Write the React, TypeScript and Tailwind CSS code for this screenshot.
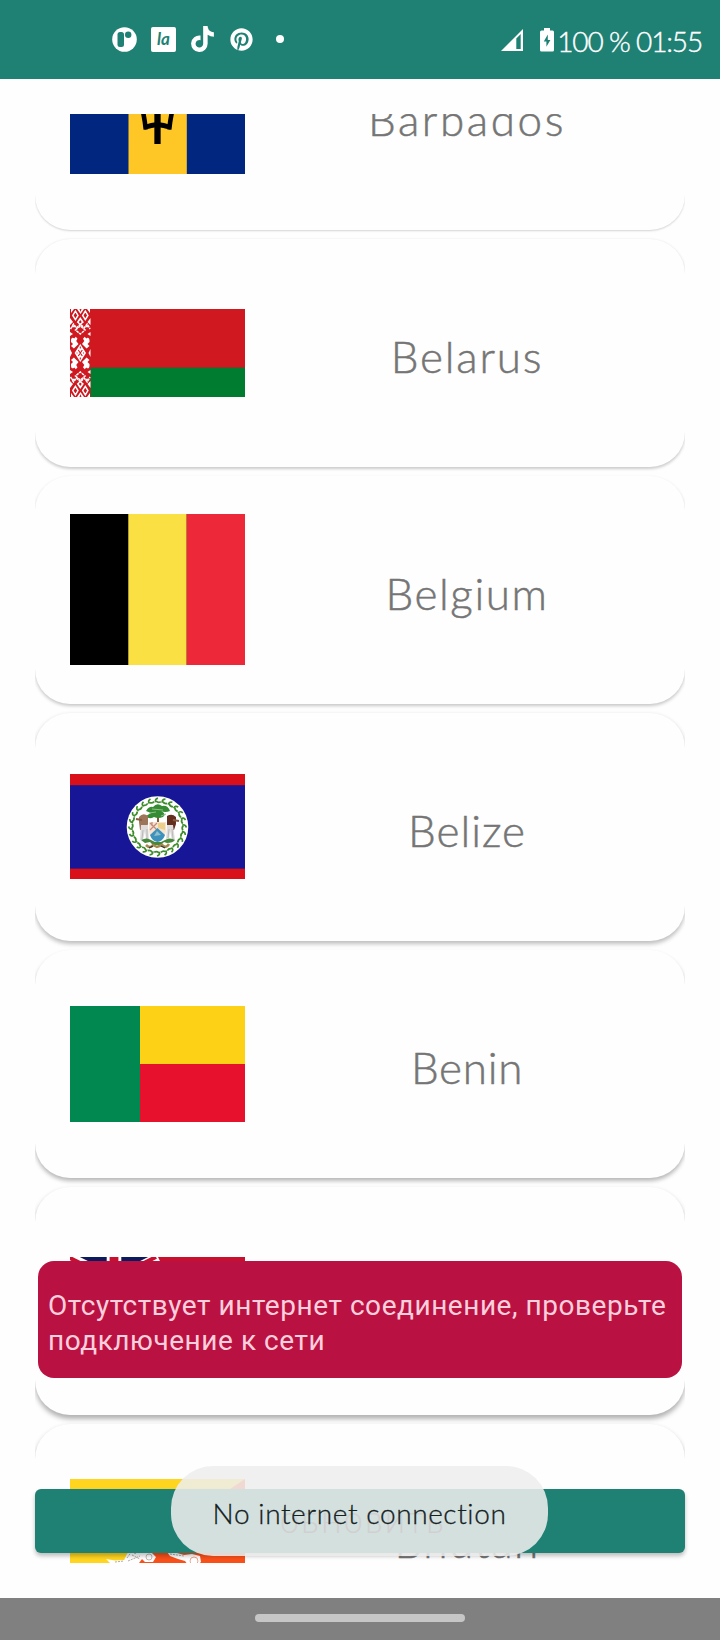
import type { ReactNode } from "react";
import { FaPinterest, FaTiktok } from "react-icons/fa6";

const sans = "font-['Lato','Noto_Sans',sans-serif] font-light";

function BarbadosFlag() {
  return (
    <svg width="175" height="116" viewBox="0 0 175 116" className="block">
      <rect width="175" height="116" fill="#00267f" />
      <rect x="58.5" width="58.3" height="116" fill="#ffc726" />
      <g fill="none" stroke="#000">
        <path d="M87.5 28V86" strokeWidth="6.3" />
        <path d="M70 42Q74 55 75.8 71.5" strokeWidth="4.6" />
        <path d="M105 42Q101 55 99.2 71.5" strokeWidth="4.6" />
        <path d="M74 69.5Q82 67 87.5 66.5Q93 67 101 69.5" strokeWidth="4.8" />
      </g>
    </svg>
  );
}

function OrnamentHalf() {
  return (
    <g>
      <path d="M1 0h3l-3 4zM7 0h2.5l1 3 1-3H14l-3.5 5zM17 0h3v4zM0 9l3 4-3 3zM20.5 9l-3 4 3 3zM10.3 8l3.6 5.2-3.6 3-3.6-3z" fill="#fff" />
      <path d="M5.4 2.2 8 6.4l-2.6 4.2-2.6-4.2zM15.3 2.2l2.6 4.2-2.6 4.2-2.6-4.2z" fill="none" stroke="#fff" strokeWidth="1.5" />
      <path d="M5.4 5l1 1.4-1 1.5-1-1.5zM15.3 5l1 1.4-1 1.5-1-1.5zM10.3 11l1.4 2-1.4 2-1.4-2z" fill="#cf1820" />
      <path d="M.5 20l3-5 3 4 3.8-4 3.8 4 3-4 3 5M2 17.5h3M15.5 17.5h3M5.5 21l4.8-4 4.8 4-4.8 4z" fill="none" stroke="#fff" strokeWidth="1.5" strokeDasharray="2.8 .7" />
      <path d="M0 23l3 2-3 2zM20.5 23l-3 2 3 2z" fill="#fff" />
      <path d="M1 33c-.5-5 2.2-5 3.2-3.5l1.6-1.8 1.7 2L6.2 32l2.3 3-4.6 4.5L1 37l2-2zM19.5 33c.5-5-2.2-5-3.2-3.5l-1.6-1.8-1.7 2 1.3 2.3-2.3 3 4.6 4.5 2.9-2.5-2-2z" fill="#fff" />
      <path d="M0 40l2 4H0zM20.5 40l-2 4h2z" fill="#fff" />
    </g>
  );
}

function BelarusFlag() {
  return (
    <svg width="175" height="88" viewBox="0 0 175 88" className="block">
      <rect width="175" height="59" fill="#cf1820" />
      <rect y="58.6" width="175" height="29.4" fill="#007c30" />
      <rect width="20.5" height="88" fill="#cf1820" />
      <OrnamentHalf />
      <g transform="matrix(1 0 0 -1 0 88)">
        <OrnamentHalf />
      </g>
      <path d="M10.3 35l5.7 9-5.7 9-5.7-9z" fill="#fff" />
      <path d="M8.3 41l4 6M12.3 41l-4 6M10.3 37.5v2M10.3 48.5v2M6.5 44h1M13 44h1" stroke="#cf1820" strokeWidth="1.1" />
    </svg>
  );
}

function BelgiumFlag() {
  return (
    <svg width="175" height="151" viewBox="0 0 175 151" className="block">
      <rect width="175" height="151" fill="#000" />
      <rect x="58.3" width="58.4" height="151" fill="#fae042" />
      <rect x="116.7" width="58.3" height="151" fill="#ed2939" />
    </svg>
  );
}

const leaves = Array.from({ length: 24 }, (_, i) => i * 15);

function BelizeFlag() {
  return (
    <svg width="175" height="105" viewBox="0 0 175 105" className="block">
      <rect width="175" height="105" fill="#d90f19" />
      <rect y="11.2" width="175" height="83.4" fill="#171696" />
      <circle cx="87.5" cy="53" r="30.8" fill="#fff" />
      {leaves.map((a) => (
        <path
          key={a}
          d="M85.7 28.3q-1.2-3.2 2.3-4.2M86.2 27.2q2 2 4.6.5"
          stroke="#3d8c2b"
          strokeWidth="1.7"
          fill="none"
          transform={`rotate(${a} 87.5 53)`}
        />
      ))}
      <path d="M87 36h2v12h-2z" fill="#7c5a3a" />
      <path d="M76 37q3-5 7-4 4-5 9-1 6-1 8 5-5 2-9 0 6 3 2 6-5 2-9 0-5 3-8-1l5-3z" fill="#378b34" />
      <path d="M82 35l11 1M79 39l7-1M91 42l5-2" stroke="#8bc184" />
      <path d="M69 43q4-5 9-1v8l-2 6h-6l-1-8z" fill="#9d765a" />
      <path d="M97 42q5-3 9 1v7l-2 6h-7v-9z" fill="#642f1f" />
      <path d="M66 45l6 1M103 46l6 1" stroke="#875b43" strokeWidth="2" />
      <path d="M71 51h7l1 15h-3l-1-9-2 9h-3zM97 51h6l2 15h-3l-2-9-1 9h-3z" fill="#dedddc" />
      <path d="M73 56l-1 9M77 55v10M99 55l-1 9M102 55l1 10" stroke="#aaa" strokeWidth=".7" />
      <path d="M79 48h17v9q-1 9-8.500 11Q80 66 79 57z" fill="#f6e4d0" />
      <path d="M80 49l7 7M87 49l-7 7M82 48v4" stroke="#c4897c" strokeWidth="1.2" />
      <path d="M88 49h7v7l-7-2z" fill="#ecd08a" />
      <path d="M80 61l7.500-7 7.500 7q-2 6-7.500 7-5.500-1-7.500-7z" fill="#3d91bd" />
      <path d="M84 62l3-5 4 4" fill="#8ebfca" />
      <path d="M71 66q6-3 10 0l4 2h6l4-2q5-3 10 0-2 3-8 3l-3-1-3 3H83l-3-3-5 1z" fill="#47883a" />
      <path d="M76 71q4 4 7 0l4 2 5-2q4 4 7-1" stroke="#a7894f" strokeWidth="2.500" fill="none" />
      <path d="M79 74l4-2M91 72l4 2" stroke="#333" strokeWidth="1.200" />
    </svg>
  );
}

function BeninFlag() {
  return (
    <svg width="175" height="116" viewBox="0 0 175 116" className="block">
      <rect width="70" height="116" fill="#008850" />
      <rect x="70" width="105" height="58" fill="#fcd116" />
      <rect x="70" y="58" width="105" height="58" fill="#e8112d" />
    </svg>
  );
}

function BermudaFlag() {
  return (
    <svg width="175" height="88" viewBox="0 0 175 88" className="block">
      <rect width="175" height="88" fill="#c8102e" />
      <rect width="88" height="44" fill="#0b1a5c" />
      <path d="M0 0l88 44M88 0L0 44" stroke="#fff" strokeWidth="8.800" />
      <path d="M-2 0l88 44M86 0L0 43" stroke="#c8102e" strokeWidth="4" />
      <path d="M44 0v44M0 22h88" stroke="#fff" strokeWidth="14.600" />
      <path d="M44 0v44M0 22h88" stroke="#c8102e" strokeWidth="8.800" />
    </svg>
  );
}

function BhutanFlag() {
  return (
    <svg width="175" height="117" viewBox="0 0 175 117" className="block">
      <rect width="175" height="117" fill="#ffd520" />
      <path d="M175 0v117H0z" fill="#f9501a" />
      <path d="M36 80l9 1.500 9-.5 3-6 6-8 9 6 9 0 5 5-3 5-8 0-3-3-3 4-10 1-9 1-9-1zM97 73l10 1 7 2 8-1 8 2 1 6-6 5-7-2-3-4-7-2-8-3z" fill="#fff" />
      <circle cx="79" cy="78" r="3" fill="none" stroke="#c5b8b0" />
      <circle cx="124" cy="82" r="4" fill="none" stroke="#f1a58d" />
      <path d="M57 79l5-7 3 3 3-5 4 3M58 82l12-5M62 76l8 4M45 83l9-1M100 75l14 2" stroke="#b6aaa0" fill="none" strokeDasharray="2 1" />
    </svg>
  );
}

type Country = { name: string; flag: ReactNode; text: string; shadow: string };

const countries: Country[] = [
  { name: "Barbados", flag: <BarbadosFlag />, text: "tracking-[2.6px]", shadow: "shadow-[0_1px_2px_rgba(0,0,0,0.17)]" },
  { name: "Belarus", flag: <BelarusFlag />, text: "tracking-[1.8px]", shadow: "shadow-[0_1.5px_3px_rgba(0,0,0,0.2)]" },
  { name: "Belgium", flag: <BelgiumFlag />, text: "tracking-[1.6px]", shadow: "shadow-[0_2px_3.5px_rgba(0,0,0,0.22)]" },
  { name: "Belize", flag: <BelizeFlag />, text: "tracking-[1px]", shadow: "shadow-[0_2.5px_4px_rgba(0,0,0,0.25)]" },
  { name: "Benin", flag: <BeninFlag />, text: "tracking-[0.7px]", shadow: "shadow-[0_3px_4.5px_rgba(0,0,0,0.28)]" },
  { name: "Bermuda", flag: <BermudaFlag />, text: "tracking-[0.6px]", shadow: "shadow-[0_3.5px_5px_rgba(0,0,0,0.3)]" },
  { name: "Bhutan", flag: <BhutanFlag />, text: "tracking-[1.5px]", shadow: "shadow-[0_3.5px_5px_rgba(0,0,0,0.3)]" },
];

function CountryCard({ name, flag, text, shadow }: Country) {
  return (
    <li className={`flex h-[228px] shrink-0 items-center rounded-[35px] bg-[#fefefe] pb-px pl-[35px] ${shadow}`}>
      <div className="w-[175px] shrink-0">{flag}</div>
      <div className={`mt-[7px] ml-[12px] w-[420px] text-center text-[44px] leading-[54px] text-[#757575] [-webkit-text-stroke:0.5px_#757575] ${text}`}>{name}</div>
    </li>
  );
}

function StatusBar() {
  return (
    <header className="flex h-[79px] shrink-0 items-start justify-between bg-[#1f8074] pr-[18px] pl-[112px] text-white">
      <div className="flex h-[78px] items-center">
        <svg width="25" height="25" viewBox="0 0 25 25">
          <circle cx="12.500" cy="12.500" r="12.300" fill="#fff" />
          <rect x="5.500" y="5" width="6.500" height="15" rx="2.500" fill="#1f8074" />
          <circle cx="16.200" cy="7.800" r="3.200" fill="#1f8074" />
        </svg>
        <div className="ml-[14px] flex size-[25px] items-center justify-center rounded-[2px] bg-white pb-[1px] font-['Lato',sans-serif] text-[17px] leading-none font-bold text-[#1f8074] italic">la</div>
        <FaTiktok className="ml-[13px] h-[26px] w-[27px]" />
        <FaPinterest className="ml-[14px] size-[23px]" />
        <span className="ml-[23px] size-[8px] rounded-full bg-white" />
      </div>
      <div className="flex h-[79px] items-center">
        <svg width="22" height="22" viewBox="0 0 22 22">
          <path d="M0 22 22 0v22z" fill="#fff" />
          <path d="M15.300 9.500 19.700 5v15h-4.400z" fill="#1f8074" />
        </svg>
        <svg width="14" height="24" viewBox="0 0 14 24" className="ml-[17px]">
          <path d="M4 0h6v2.500h2.500Q14 2.500 14 4v18q0 1.500-1.500 1.500h-11Q0 23.500 0 22V4q0-1.500 1.500-1.500H4z" fill="#fff" />
          <path d="M7.800 6.500 3.800 13.500h2.600v5.300L10.400 12H7.800z" fill="#1f8074" />
        </svg>
        <span className="ml-[3px] pt-[3px] text-[28px] leading-[34px] font-light tracking-[-1.15px] whitespace-nowrap [-webkit-text-stroke:0.4px_#fff]">100 % 01:55</span>
      </div>
    </header>
  );
}

export default function App() {
  return (
    <div className={`flex h-[1640px] w-[720px] flex-col overflow-hidden bg-[#fefefe] ${sans}`}>
      <StatusBar />
      <main className="relative flex h-[1519px] shrink-0 flex-col p-[35px]">
        <div className="h-[1449px] overflow-hidden">
          <ul className="-mt-[112px] flex flex-col gap-[9px]">
            {countries.map((c) => (
              <CountryCard key={c.name} {...c} />
            ))}
          </ul>
        </div>
        <div className="absolute top-[1182px] left-[38px] flex h-[117px] w-[644px] items-center rounded-[16px] bg-[#b91242] pt-[6px] pl-[10px] font-['Roboto',sans-serif] text-[28px] leading-[35px] font-normal tracking-[0.54px] text-[#ffcfdd]">
          <p className="whitespace-nowrap">
            Отсутствует интернет соединение, проверьте
            <br />
            подключение к сети
          </p>
        </div>
        <button className="absolute top-[1410px] left-[35px] flex h-[64px] w-[650px] items-center justify-center rounded-[6px] bg-[#1f8074] pt-[5px] pl-[6px] font-['Roboto',sans-serif] text-[28px] leading-[34px] font-light tracking-[2.5px] text-[#120004] shadow-[0_3px_4px_rgba(0,0,0,0.26)]">
          ОБНОВИТЬ
        </button>
        <div className="absolute top-[1387px] left-[171px] flex h-[90px] w-[377px] items-center justify-center rounded-[42px] bg-[#eeeeee]/87 pt-[4px] text-[28px] leading-[34px] tracking-[0.6px] whitespace-nowrap text-[#13211f] [-webkit-text-stroke:0.3px_#13211f]">
          No internet connection
        </div>
      </main>
      <nav className="flex h-[42px] shrink-0 justify-center bg-[#808080] pt-[16px]">
        <span className="h-[8px] w-[210px] rounded-full bg-[#c6c6c6]" />
      </nav>
    </div>
  );
}
